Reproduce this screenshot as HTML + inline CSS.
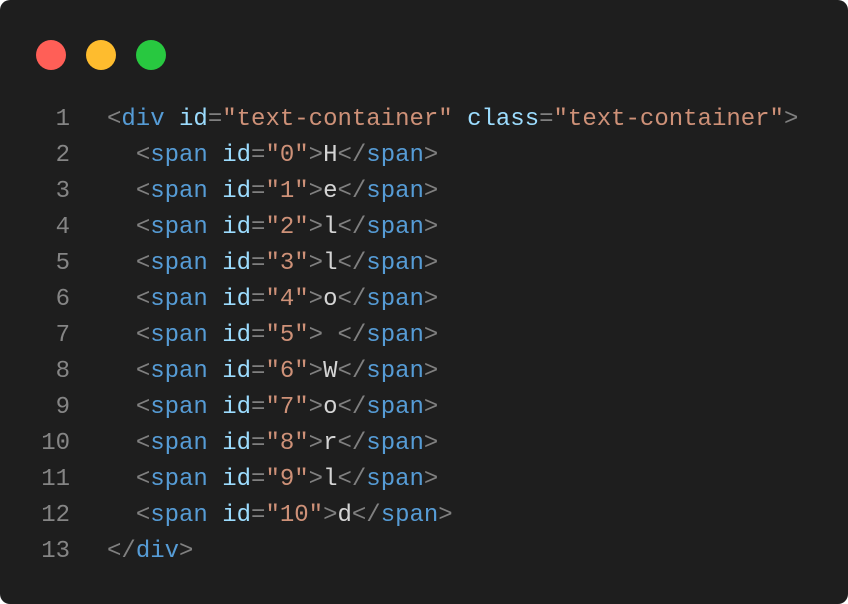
<!DOCTYPE html>
<html><head><style>
html,body{margin:0;padding:0;background:#fff;}
.win{position:absolute;left:0;top:0;width:848px;height:604px;background:#1e1e1e;border-radius:10px;overflow:hidden;}
.dot{position:absolute;top:40px;width:30px;height:30px;border-radius:50%;}
.code{position:absolute;left:0;top:102px;font-family:"Liberation Mono",monospace;font-size:24px;line-height:36px;white-space:pre;color:#d4d4d4;}
.ln{display:inline-block;width:70px;text-align:right;color:#858585;margin-right:37px;}
.p{color:#808080}.t{color:#569cd6}.a{color:#9cdcfe}.s{color:#ce9178}
</style></head><body><div class="win">
<div class="dot" style="left:36px;background:#ff5f57"></div>
<div class="dot" style="left:86px;background:#febc2e"></div>
<div class="dot" style="left:136px;background:#28c840"></div>
<div class="code"><div><span class="ln">1</span><span class="p">&lt;</span><span class="t">div</span> <span class="a">id</span><span class="p">=</span><span class="s">"text-container"</span> <span class="a">class</span><span class="p">=</span><span class="s">"text-container"</span><span class="p">&gt;</span></div><div><span class="ln">2</span>  <span class="p">&lt;</span><span class="t">span</span> <span class="a">id</span><span class="p">=</span><span class="s">"0"</span><span class="p">&gt;</span>H<span class="p">&lt;/</span><span class="t">span</span><span class="p">&gt;</span></div><div><span class="ln">3</span>  <span class="p">&lt;</span><span class="t">span</span> <span class="a">id</span><span class="p">=</span><span class="s">"1"</span><span class="p">&gt;</span>e<span class="p">&lt;/</span><span class="t">span</span><span class="p">&gt;</span></div><div><span class="ln">4</span>  <span class="p">&lt;</span><span class="t">span</span> <span class="a">id</span><span class="p">=</span><span class="s">"2"</span><span class="p">&gt;</span>l<span class="p">&lt;/</span><span class="t">span</span><span class="p">&gt;</span></div><div><span class="ln">5</span>  <span class="p">&lt;</span><span class="t">span</span> <span class="a">id</span><span class="p">=</span><span class="s">"3"</span><span class="p">&gt;</span>l<span class="p">&lt;/</span><span class="t">span</span><span class="p">&gt;</span></div><div><span class="ln">6</span>  <span class="p">&lt;</span><span class="t">span</span> <span class="a">id</span><span class="p">=</span><span class="s">"4"</span><span class="p">&gt;</span>o<span class="p">&lt;/</span><span class="t">span</span><span class="p">&gt;</span></div><div><span class="ln">7</span>  <span class="p">&lt;</span><span class="t">span</span> <span class="a">id</span><span class="p">=</span><span class="s">"5"</span><span class="p">&gt;</span> <span class="p">&lt;/</span><span class="t">span</span><span class="p">&gt;</span></div><div><span class="ln">8</span>  <span class="p">&lt;</span><span class="t">span</span> <span class="a">id</span><span class="p">=</span><span class="s">"6"</span><span class="p">&gt;</span>W<span class="p">&lt;/</span><span class="t">span</span><span class="p">&gt;</span></div><div><span class="ln">9</span>  <span class="p">&lt;</span><span class="t">span</span> <span class="a">id</span><span class="p">=</span><span class="s">"7"</span><span class="p">&gt;</span>o<span class="p">&lt;/</span><span class="t">span</span><span class="p">&gt;</span></div><div><span class="ln">10</span>  <span class="p">&lt;</span><span class="t">span</span> <span class="a">id</span><span class="p">=</span><span class="s">"8"</span><span class="p">&gt;</span>r<span class="p">&lt;/</span><span class="t">span</span><span class="p">&gt;</span></div><div><span class="ln">11</span>  <span class="p">&lt;</span><span class="t">span</span> <span class="a">id</span><span class="p">=</span><span class="s">"9"</span><span class="p">&gt;</span>l<span class="p">&lt;/</span><span class="t">span</span><span class="p">&gt;</span></div><div><span class="ln">12</span>  <span class="p">&lt;</span><span class="t">span</span> <span class="a">id</span><span class="p">=</span><span class="s">"10"</span><span class="p">&gt;</span>d<span class="p">&lt;/</span><span class="t">span</span><span class="p">&gt;</span></div><div><span class="ln">13</span><span class="p">&lt;/</span><span class="t">div</span><span class="p">&gt;</span></div></div>
</div></body></html>
